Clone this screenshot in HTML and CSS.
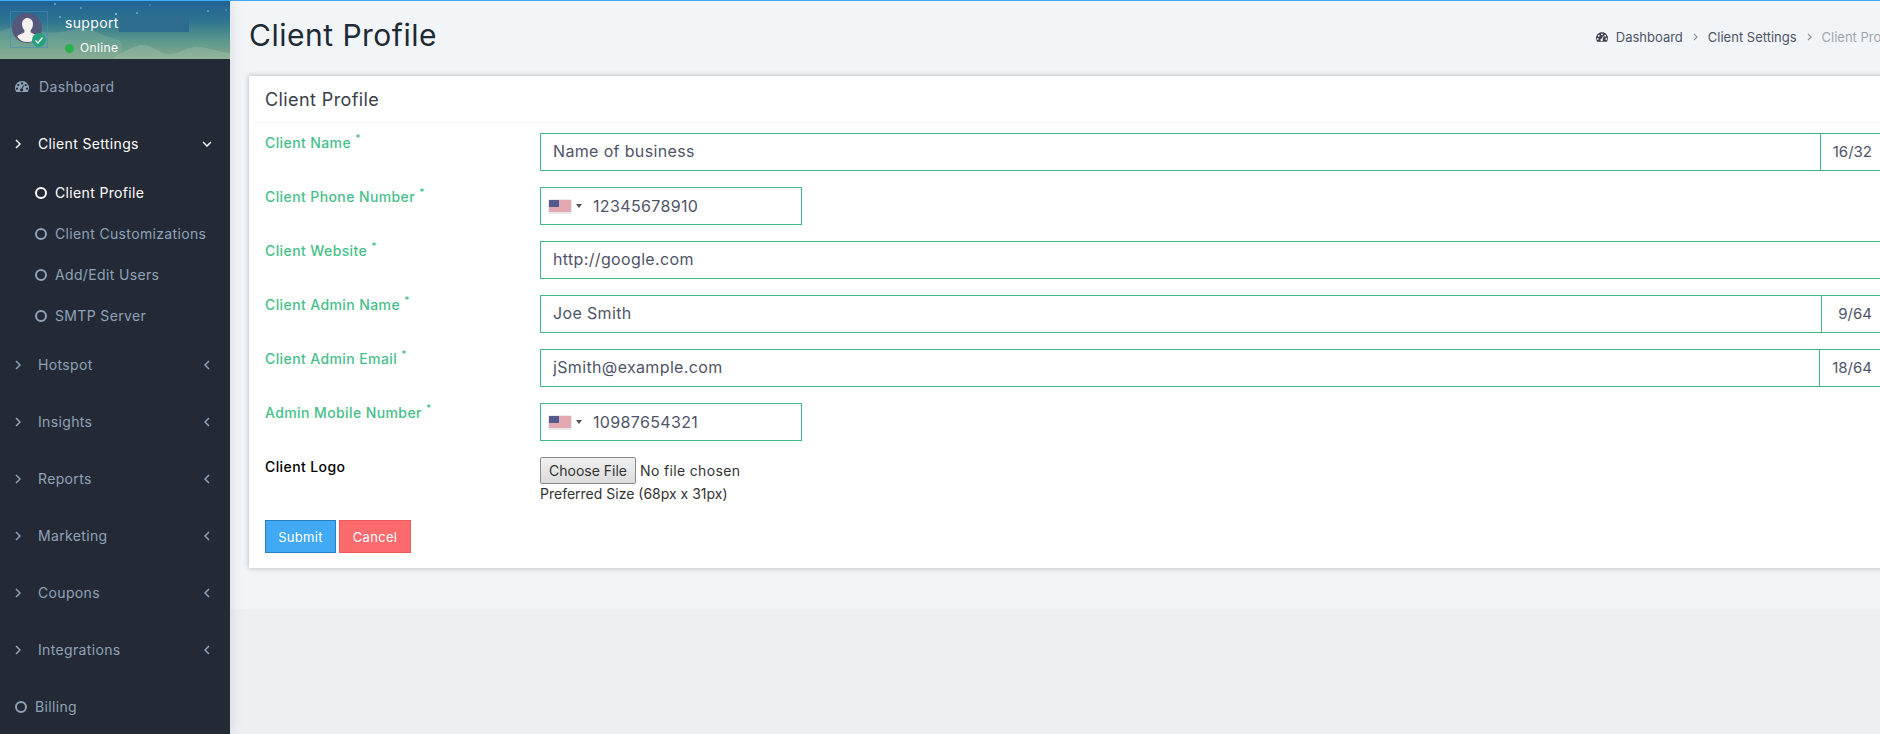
FILE: index.html
```html
<!DOCTYPE html>
<html lang="en">
<head>
    <meta charset="UTF-8">
    <meta name="viewport" content="width=device-width, initial-scale=1.0">
    <title>Client Profile</title>
    <link rel="stylesheet" href="styles.css">
</head>
<body>
    <svg class="icon-defs" width="0" height="0">
        <symbol id="gauge" viewBox="0 0 14 11">
            <path fill-rule="evenodd" d="M1.4 11C.5 9.9 0 8.6 0 7.1 0 3.2 3.1 0 7 0s7 3.2 7 7.1c0 1.500-.5 2.800-1.400 3.900H1.400zM7 1.300a1.100 1.100 0 1 0 0 2.200 1.100 1.100 0 0 0 0-2.200zM3.300 3a1.100 1.100 0 1 0 0 2.200 1.100 1.100 0 0 0 0-2.200zM10.700 3a1.100 1.100 0 1 0 0 2.200 1.100 1.100 0 0 0 0-2.200zM2 6.600a1.100 1.100 0 1 0 0 2.200 1.100 1.100 0 0 0 0-2.200zM12 6.600a1.100 1.100 0 1 0 0 2.200 1.100 1.100 0 0 0 0-2.200zM8.300 4.200 6.500 7.400a1.500 1.500 0 1 0 1.100.4l1.500-3.300z"/>
        </symbol>
        <symbol id="arrow-right" viewBox="0 0 6 10">
            <polyline points="1,1 5,5 1,9" fill="none" stroke="currentColor" stroke-width="1.500"/>
        </symbol>
        <symbol id="arrow-left" viewBox="0 0 6 10">
            <polyline points="5,1 1,5 5,9" fill="none" stroke="currentColor" stroke-width="1.500"/>
        </symbol>
        <symbol id="arrow-down" viewBox="0 0 10 6">
            <polyline points="1,1 5,5 9,1" fill="none" stroke="currentColor" stroke-width="1.500"/>
        </symbol>
        <symbol id="us-flag" viewBox="0 0 22 13" preserveAspectRatio="none">
            <rect width="22" height="13" fill="#f3e6e8"/>
            <path d="M0 1h22M0 3h22M0 5h22M0 7h22M0 9h22M0 11h22" stroke="#cf6f7c" stroke-width="1"/>
            <rect width="10" height="7" fill="#55598c"/>
        </symbol>
    </svg>

    <div class="layout">
        <aside class="sidebar">
            <div class="user-banner">
                <svg class="banner-hills" viewBox="0 0 230 58" preserveAspectRatio="none">
                    <path d="M0 30C14 25 24 24 36 29s30 2 42-2c12 0 22 6 34 10 10 2 14 8 6 21H0z" fill="#8fb5a2" opacity=".3"/>
                    <path d="M112 58c10-6 18-12 28-14 10-1 18 6 26 9 12 2 16-6 30-7 12 0 22 5 34 6v6z" fill="#a3c2ac" opacity=".4"/>
                    <g fill="#b9d3de">
                        <circle cx="55" cy="3" r=".8"/><circle cx="60" cy="16" r=".8"/><circle cx="81" cy="7" r=".7"/>
                        <circle cx="116" cy="13" r=".9"/><circle cx="137" cy="12" r=".8"/><circle cx="208" cy="10" r=".8"/>
                        <circle cx="226" cy="9" r=".6"/><circle cx="150" cy="4" r=".6"/>
                    </g>
                </svg>
                <div class="avatar">
                    <svg viewBox="0 0 30 30" width="30" height="30">
                        <circle cx="15" cy="15" r="15" fill="#55587a"/>
                        <path d="M15.500 5c3 0 5.500 2.400 5.500 6 0 2.600-1 4.700-2.400 6v2.200c2 1.300 5.500 2 6.900 3.800v1c-2 3-5.500 5-10 5s-8-2-10-5v-1c1.400-1.800 4.900-2.500 6.900-3.800V17C11 15.700 10 13.600 10 11c0-3.600 2.500-6 5.500-6z" fill="#f4f1ee"/>
                    </svg>
                    <span class="avatar-check">
                        <svg viewBox="0 0 14 14" width="14" height="14">
                            <polyline points="3.500,7.500 6,10 10.500,4.500" fill="none" stroke="#fff" stroke-width="1.300"/>
                        </svg>
                    </span>
                </div>
                <div class="user-info">
                    <div class="user-name">support<span class="user-mask"></span></div>
                    <div class="user-status"><span class="status-dot"></span>Online</div>
                </div>
            </div>

            <ul class="nav">
                <li class="nav-item">
                    <a class="nav-link"><svg class="nav-gauge"><use href="#gauge"/></svg><span>Dashboard</span></a>
                </li>
                <li class="nav-item active">
                    <a class="nav-link">
                        <svg class="nav-arrow"><use href="#arrow-right"/></svg>
                        <span>Client Settings</span>
                        <svg class="nav-down"><use href="#arrow-down"/></svg>
                    </a>
                    <ul class="sub-nav">
                        <li class="sub-item active"><i class="ring"></i>Client Profile</li>
                        <li class="sub-item"><i class="ring"></i>Client Customizations</li>
                        <li class="sub-item"><i class="ring"></i>Add/Edit Users</li>
                        <li class="sub-item"><i class="ring"></i>SMTP Server</li>
                    </ul>
                </li>
                <li class="nav-item">
                    <a class="nav-link"><svg class="nav-arrow"><use href="#arrow-right"/></svg><span>Hotspot</span><svg class="nav-left"><use href="#arrow-left"/></svg></a>
                </li>
                <li class="nav-item">
                    <a class="nav-link"><svg class="nav-arrow"><use href="#arrow-right"/></svg><span>Insights</span><svg class="nav-left"><use href="#arrow-left"/></svg></a>
                </li>
                <li class="nav-item">
                    <a class="nav-link"><svg class="nav-arrow"><use href="#arrow-right"/></svg><span>Reports</span><svg class="nav-left"><use href="#arrow-left"/></svg></a>
                </li>
                <li class="nav-item">
                    <a class="nav-link"><svg class="nav-arrow"><use href="#arrow-right"/></svg><span>Marketing</span><svg class="nav-left"><use href="#arrow-left"/></svg></a>
                </li>
                <li class="nav-item">
                    <a class="nav-link"><svg class="nav-arrow"><use href="#arrow-right"/></svg><span>Coupons</span><svg class="nav-left"><use href="#arrow-left"/></svg></a>
                </li>
                <li class="nav-item">
                    <a class="nav-link"><svg class="nav-arrow"><use href="#arrow-right"/></svg><span>Integrations</span><svg class="nav-left"><use href="#arrow-left"/></svg></a>
                </li>
                <li class="nav-item">
                    <a class="nav-link billing"><i class="ring"></i><span>Billing</span></a>
                </li>
            </ul>
        </aside>

        <main class="page-wrapper">
            <div class="page-titles">
                <h1>Client Profile</h1>
                <ol class="breadcrumb">
                    <li><svg class="crumb-gauge"><use href="#gauge"/></svg>Dashboard</li>
                    <li class="crumb-sep"><svg><use href="#arrow-right"/></svg></li>
                    <li>Client Settings</li>
                    <li class="crumb-sep"><svg><use href="#arrow-right"/></svg></li>
                    <li class="crumb-active">Client Profile</li>
                </ol>
            </div>

            <section class="card">
                <h2 class="card-title">Client Profile</h2>
                <form class="card-body">
                    <div class="form-row">
                        <label class="req">Client Name <sup>*</sup></label>
                        <div class="input-group">
                            <input class="form-control" type="text" value="Name of business">
                            <span class="counter">16/32</span>
                        </div>
                    </div>
                    <div class="form-row">
                        <label class="req">Client Phone Number <sup>*</sup></label>
                        <div class="phone-input">
                            <svg class="flag"><use href="#us-flag"/></svg>
                            <i class="caret"></i>
                            <input type="text" value="12345678910">
                        </div>
                    </div>
                    <div class="form-row">
                        <label class="req">Client Website <sup>*</sup></label>
                        <div class="input-group">
                            <input class="form-control" type="text" value="http://google.com">
                        </div>
                    </div>
                    <div class="form-row">
                        <label class="req">Client Admin Name <sup>*</sup></label>
                        <div class="input-group">
                            <input class="form-control" type="text" value="Joe Smith">
                            <span class="counter">9/64</span>
                        </div>
                    </div>
                    <div class="form-row">
                        <label class="req">Client Admin Email <sup>*</sup></label>
                        <div class="input-group">
                            <input class="form-control" type="text" value="jSmith@example.com">
                            <span class="counter">18/64</span>
                        </div>
                    </div>
                    <div class="form-row">
                        <label class="req">Admin Mobile Number <sup>*</sup></label>
                        <div class="phone-input">
                            <svg class="flag"><use href="#us-flag"/></svg>
                            <i class="caret"></i>
                            <input type="text" value="10987654321">
                        </div>
                    </div>
                    <div class="form-row logo-row">
                        <label>Client Logo</label>
                        <div class="file-col">
                            <input class="file-input" type="file">
                            <small>Preferred Size (68px x 31px)</small>
                        </div>
                    </div>
                    <div class="form-actions">
                        <button class="btn btn-submit" type="button">Submit</button>
                        <button class="btn btn-cancel" type="button">Cancel</button>
                    </div>
                </form>
            </section>
        </main>
    </div>
</body>
</html>
```

FILE: styles.css
```css
html, body {
    height: 100%;
}

body {
    margin: 0;
    font-family: Inter, "Open Sans", sans-serif;
    font-size: 14px;
    color: #4f5467;
    background-color: #edf0f3;
    border-top: 1px solid #42a9f5;
    box-sizing: border-box;
    overflow: hidden;
}

.icon-defs {
    position: absolute;
}

.layout {
    display: flex;
    width: 1930px;
    height: 733px;
}

/* sidebar */
.sidebar {
    flex: 0 0 230px;
    background-color: #242a35;
    box-shadow: 1px 0 12px rgba(0, 0, 0, 0.1);
    letter-spacing: 0.35px;
    position: relative;
    z-index: 1;
}

.user-banner {
    position: relative;
    height: 58px;
    display: flex;
    align-items: flex-start;
    background: linear-gradient(180deg, #1f6397 0%, #2f7490 35%, #5a988c 68%, #86a88c 100%);
    overflow: hidden;
}

.banner-hills {
    position: absolute;
    inset: 0;
    width: 100%;
    height: 100%;
}

.avatar {
    position: relative;
    width: 30px;
    height: 30px;
    margin: 12px 0 0 12px;
}

.avatar::before {
    content: '';
    position: absolute;
    left: -2px;
    top: -2px;
    width: 36px;
    height: 35px;
    border: 1px solid rgba(66, 140, 190, 0.6);
}

.avatar > svg {
    position: relative;
    display: block;
}

.avatar-check {
    position: absolute;
    right: -4px;
    bottom: -4px;
    width: 14px;
    height: 14px;
    border-radius: 50%;
    background-color: #26a17f;
    display: flex;
}

.user-info {
    position: relative;
    margin-left: 23px;
    color: #fff;
}

.user-name {
    position: relative;
    margin-top: 12px;
    font-size: 14px;
    line-height: 20px;
}

.user-mask {
    position: absolute;
    left: 54px;
    top: 3px;
    width: 70px;
    height: 16px;
    background-color: #2e6c8e;
}

.user-status {
    display: flex;
    align-items: center;
    margin-top: 7px;
    font-size: 12px;
    line-height: 16px;
}

.status-dot {
    width: 9px;
    height: 9px;
    border-radius: 50%;
    background-color: #2cb04c;
    margin-right: 6px;
}

.nav, .sub-nav {
    list-style: none;
    margin: 0;
    padding: 0;
}

.nav {
    margin-top: -1px;
}

.nav-link {
    display: flex;
    align-items: center;
    height: 57px;
    padding: 0 20px 0 15px;
    color: #8ea2b8;
}

.nav-link span {
    flex: 1;
}

.nav-gauge {
    width: 14px;
    height: 11px;
    margin-right: 10px;
    fill: #8ea2b8;
}

.nav-arrow {
    width: 6px;
    height: 10px;
    margin-right: 17px;
}

.nav-left {
    width: 6px;
    height: 10px;
}

.nav-down {
    width: 10px;
    height: 6px;
    margin-right: -2px;
}

.ring {
    display: inline-block;
    box-sizing: border-box;
    width: 12px;
    height: 12px;
    border: 2px solid #8ea2b8;
    border-radius: 50%;
}

.billing .ring {
    margin-right: 8px;
}

.nav-item.active > .nav-link {
    color: #fff;
}

.sub-item {
    display: flex;
    align-items: center;
    height: 41px;
    padding-left: 35px;
    color: #8ea2b8;
}

.sub-item .ring {
    margin-right: 8px;
}

.sub-item.active {
    color: #fff;
}

.sub-item.active .ring {
    border-color: #fff;
}

/* content */
.page-wrapper {
    flex: 1;
    align-self: flex-start;
    background-color: #f2f5f8;
    padding: 0 19px 41px;
}

.page-titles {
    display: flex;
    align-items: center;
    justify-content: space-between;
    height: 75px;
    padding-bottom: 7px;
    box-sizing: border-box;
}

h1 {
    margin: 0;
    font-size: 30px;
    font-weight: 400;
    letter-spacing: 0.5px;
    color: #1e2a35;
}

.breadcrumb {
    display: flex;
    align-items: center;
    list-style: none;
    margin: 4px 11px 0 0;
    padding: 0;
    font-size: 13px;
}

.crumb-gauge {
    width: 12px;
    height: 10px;
    margin-right: 8px;
    fill: #3f4350;
}

.crumb-sep {
    display: flex;
    margin: 0 10px;
    color: #8b929b;
}

.crumb-sep svg {
    width: 5px;
    height: 8px;
}

.crumb-active {
    color: #a1a7ae;
}

.card {
    background-color: #fff;
    box-shadow: 0 0 5px rgba(0, 0, 0, 0.28);
    height: 492px;
    box-sizing: border-box;
}

.card-title {
    margin: 0 0 0 6px;
    padding-left: 10px;
    height: 46px;
    line-height: 48px;
    font-size: 18px;
    font-weight: 400;
    letter-spacing: 0.4px;
    color: #3a3f47;
    border-bottom: 1px solid #f5f6f7;
}

.card-body {
    padding: 10px 26px 0 16px;
}

.form-row {
    display: grid;
    grid-template-columns: 275px 1fr;
    height: 38px;
    margin-bottom: 16px;
}

.form-row label {
    font-size: 14px;
    font-weight: 500;
    line-height: 20px;
    letter-spacing: 0.4px;
    color: #000;
}

.form-row label.req {
    color: #47bf8b;
}

sup {
    font-size: 10px;
    line-height: 0;
}

.input-group {
    display: flex;
    height: 38px;
}

.form-control, .phone-input input {
    font: inherit;
    font-size: 16px;
    letter-spacing: 0.35px;
    color: #4f5467;
    outline: none;
}

.form-control {
    flex: 1;
    min-width: 0;
    box-sizing: border-box;
    height: 38px;
    padding: 0 12px 2px;
    border: 1px solid #41b883;
}

.counter {
    display: flex;
    align-items: center;
    justify-content: flex-end;
    min-width: 38px;
    padding: 0 12px 2px;
    font-size: 15px;
    border: 1px solid #41b883;
    border-left: none;
}

.phone-input {
    display: flex;
    align-items: center;
    box-sizing: border-box;
    width: 262px;
    height: 38px;
    padding-left: 8px;
    border: 1px solid #41b883;
}

.phone-input input {
    flex: 1;
    min-width: 0;
    border: none;
    padding: 0;
}

.flag {
    width: 22px;
    height: 13px;
    box-shadow: 0 0 1px #888;
}

.caret {
    width: 0;
    height: 0;
    margin: 0 11px 0 5px;
    border-left: 3px solid transparent;
    border-right: 3px solid transparent;
    border-top: 4px solid #555;
}

.logo-row {
    height: auto;
    margin-bottom: 0;
}

.file-col {
    display: flex;
    flex-direction: column;
    align-items: flex-start;
}

.file-input {
    font: inherit;
    font-size: 14px;
    letter-spacing: 0.35px;
    color: #333;
    height: 27px;
}

.file-input::file-selector-button {
    height: 27px;
    padding: 0 8px;
    margin-right: 4px;
    font: inherit;
    color: #333;
    border: 1px solid #8a8a8a;
    border-radius: 2px;
    background: linear-gradient(180deg, #f0f0f0, #dcdcdc);
}

.file-col small {
    margin-top: 0;
    font-size: 14px;
    line-height: 20px;
    color: #333;
}

.form-actions {
    display: flex;
    gap: 3px;
    margin-top: 16px;
}

.btn {
    font: inherit;
    font-size: 13px;
    letter-spacing: 0.3px;
    height: 33px;
    padding: 0;
    color: #fff;
    cursor: pointer;
}

.btn-submit {
    width: 71px;
    background-color: #42a9f5;
    border: 1px solid #2a7fbf;
}

.btn-cancel {
    width: 72px;
    background-color: #fb6a6c;
    border: 1px solid #ee5a5c;
}
```
